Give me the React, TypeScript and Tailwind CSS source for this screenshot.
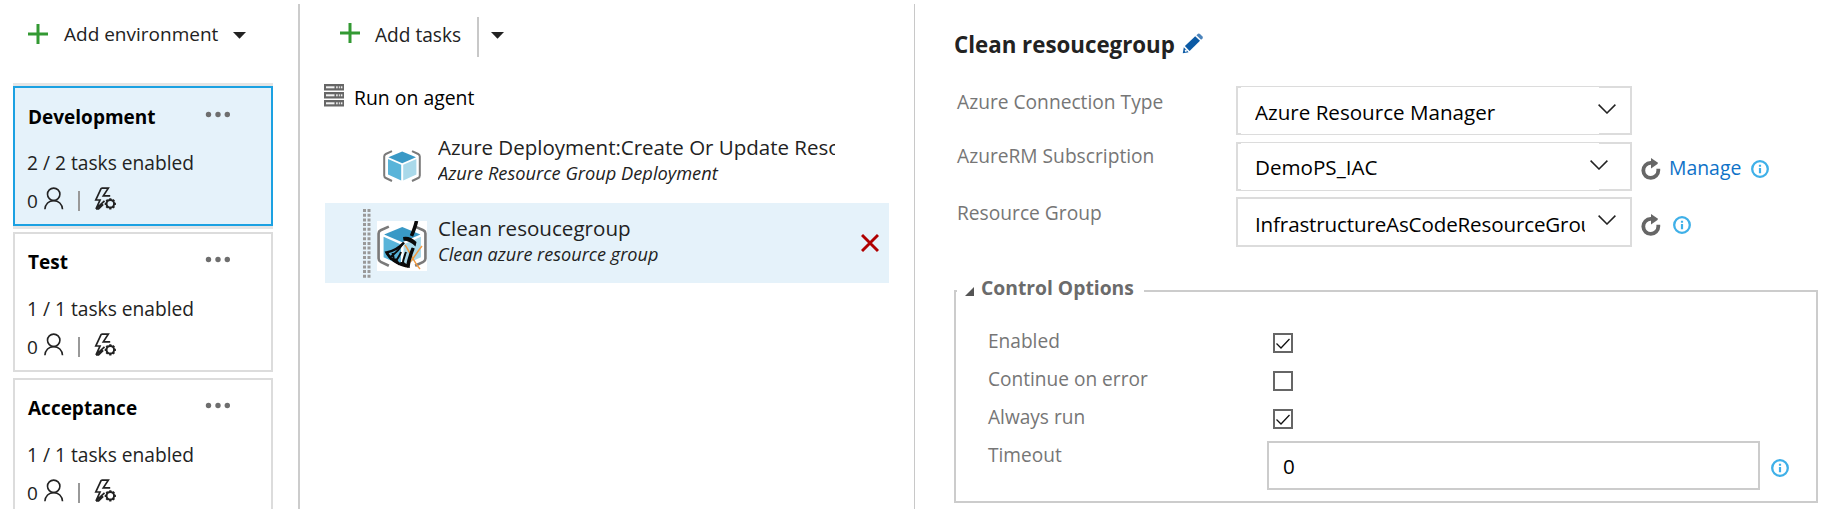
import type { ReactNode } from "react";

function PlusIcon() {
  return (
    <svg width="20" height="20" viewBox="0 0 20 20" className="shrink-0">
      <path d="M10 0v20M0 10h20" stroke="#339933" strokeWidth="3" fill="none" />
    </svg>
  );
}

function Caret() {
  return (
    <svg width="13" height="7" viewBox="0 0 13 7" className="shrink-0">
      <path d="M0 0h13L6.5 6.8z" fill="#222" />
    </svg>
  );
}

function Dots() {
  return (
    <svg width="26" height="7" viewBox="0 0 26 7" className="shrink-0">
      <g fill="#6e6e6e">
        <circle cx="3.5" cy="3.5" r="2.7" />
        <circle cx="13" cy="3.5" r="2.7" />
        <circle cx="22.3" cy="3.5" r="2.7" />
      </g>
    </svg>
  );
}

function PersonIcon() {
  return (
    <svg width="20" height="23" viewBox="0 0 20 23" className="shrink-0" fill="none" stroke="#222" strokeWidth="1.6">
      <circle cx="9.7" cy="7.3" r="6.2" />
      <path d="M0.9 22.3C1.2 17 4.8 13.6 9.7 13.6s8.5 3.4 8.8 8.7" />
    </svg>
  );
}

function BoltGearIcon() {
  return (
    <svg width="23" height="23" viewBox="0 0 23 23" className="shrink-0" fill="none" stroke="#222" strokeWidth="1.7">
      <path d="M7.3 1.2H14.3L9.3 8.8H16.2M7.3 1.2L1.8 13H6L2 21.8L10.5 13.8M2 21.8H4.6L9.2 17.4" />
      <circle cx="16.3" cy="16.8" r="3.8" strokeWidth="2" />
      <path
        d="M16.3 11.2v2M16.3 20.4v2M10.7 16.8h2M19.9 16.8h2M12.35 12.85l1.4 1.4M18.85 19.35l1.4 1.4M20.25 12.85l-1.4 1.4M13.75 19.35l-1.4 1.4"
        strokeWidth="2.2"
      />
    </svg>
  );
}

function ServerIcon() {
  return (
    <svg width="20" height="23" viewBox="0 0 20 23" className="shrink-0">
      {[0, 8, 16].map((y) => (
        <g key={y}>
          <rect x="0" y={y} width="20" height="6.5" fill="#666" />
          <rect x="2" y={y + 2.3} width="8.5" height="2" fill="#f2f2f2" />
          <rect x="12" y={y + 2.3} width="1.8" height="2" fill="#ddd" />
          <rect x="14.8" y={y + 2.3} width="1.4" height="2" fill="#ddd" />
          <rect x="17" y={y + 2.3} width="1.4" height="2" fill="#eee" />
        </g>
      ))}
    </svg>
  );
}

function CubeShape() {
  return (
    <>
      <path
        d="M9 1.2L2.8 4Q1.2 4.8 1.2 6.5V25.5Q1.2 27.2 2.8 28L9 31M29 1.2L35.200 4Q36.8 4.8 36.8 6.5V25.5Q36.8 27.2 35.2 28L29 31"
        fill="none"
        stroke="#7a7a7a"
        strokeWidth="2"
      />
      <path d="M19.2 1.5L33 7.2L19.2 13.2L5.400 7.2z" fill="#3999c6" />
      <path d="M5 9L18.2 14.8V30.5L5 24.5z" fill="#59b4d9" />
      <path d="M33.4 9L20.2 14.8V30.500L33.4 24.5z" fill="#a9d9ea" />
    </>
  );
}

function CubeIcon() {
  return (
    <svg width="38" height="32" viewBox="0 0 38 32" className="shrink-0">
      <CubeShape />
    </svg>
  );
}

function BroomIcon() {
  return (
    <svg width="50" height="50" viewBox="0 0 50 50" className="shrink-0 bg-white">
      <g transform="translate(0 4) scale(1.316)">
        <CubeShape />
      </g>
      <path d="M28 24C33 31 36 40 43 48M45 25C39 32 36 40 28 46" fill="none" stroke="#f39a3f" strokeWidth="1.5" />
      <path d="M39.500 0C38.500 5 37 9 34.500 15" stroke="#0a0a0a" strokeWidth="3.6" fill="none" />
      <path d="M26 16Q33 14.500 39.500 21L38.500 25.500Q33 20 26.500 19.500z" fill="#0a0a0a" />
      <path d="M27 21.500C22 27 17 30 9.500 31.500C12 37 20 44 31.500 45.500C32 38 34.500 33 36.500 27" fill="none" stroke="#0a0a0a" strokeWidth="2.6" />
      <path
        d="M26 22.500C22 29 18 33 13 36M15.500 32C16.500 36 17.500 38 16 40M24 31C22.500 35 20.500 38 18 41M29 31C27 36 26 40 25.500 44M35.500 27C33 33 31 39 30 45M10 31.500L14 38L19 38.500L22 43L26 41.500L31 46"
        fill="none"
        stroke="#0a0a0a"
        strokeWidth="2"
      />
    </svg>
  );
}

function PencilIcon() {
  return (
    <svg width="22" height="21" viewBox="0 0 22 21" className="shrink-0">
      <path d="M0.8 20.3L1.8 14.3L6.6 19.3z" fill="#0b5aa5" />
      <path d="M2.9 13.1L13.2 3.2L18 7.8L7.6 18z" fill="#0b5aa5" />
      <path d="M14.4 2.2L16 0.8Q17 0.2 18 1L20.5 3.5Q21.2 4.5 20.5 5.5L19.1 6.8z" fill="#4b83bb" />
      <path d="M3.2 17.2l1.3 1.3" stroke="#fff" strokeWidth="1.8" />
    </svg>
  );
}

function Chevron() {
  return (
    <svg width="18" height="10" viewBox="0 0 18 10" className="shrink-0">
      <path d="M0.6 0.6L9 9L17.4 0.6" fill="none" stroke="#222" strokeWidth="1.5" />
    </svg>
  );
}

function ReloadIcon() {
  return (
    <svg width="20" height="22" viewBox="0 0 20 22" className="shrink-0">
      <path d="M11 4.9H9.6A7.500 7.500 0 1 0 17.300 12.400V10.800" fill="none" stroke="#666" strokeWidth="3.8" />
      <path d="M10 0L17 4.8L16.500 6L10 10.500z" fill="#666" />
    </svg>
  );
}

function InfoIcon() {
  return (
    <svg width="18" height="18" viewBox="0 0 18 18" className="shrink-0">
      <circle cx="9" cy="9" r="7.8" fill="none" stroke="#3fb0e8" strokeWidth="2.3" />
      <path d="M9 4.7v2.100M9 8v5.200" stroke="#3fb0e8" strokeWidth="2.2" />
    </svg>
  );
}

type Environment = { name: string; tasks: string; selected?: boolean };

const environments: Environment[] = [
  { name: "Development", tasks: "2 / 2 tasks enabled", selected: true },
  { name: "Test", tasks: "1 / 1 tasks enabled" },
  { name: "Acceptance", tasks: "1 / 1 tasks enabled" },
];

function EnvironmentCard({ name, tasks, selected }: Environment) {
  return (
    <div
      className={
        selected
          ? "h-[140px] w-[260px] shrink-0 border-2 border-[#1ba1e2] bg-[#e5f2fa] pt-4 pl-3 shadow-[0_3px_0_#e5e5e5,0_-3px_0_#e5e5e5]"
          : "h-[140px] w-[260px] shrink-0 border-2 border-[#dcdcdc] bg-white pt-[15px] pl-3"
      }
    >
      <div className="flex h-[26px] items-start justify-between pr-[40px]">
        <span className="pl-px text-[19px] leading-[26px] font-bold text-black">{name}</span>
        <span className="pt-[7px]">
          <Dots />
        </span>
      </div>
      <div className={selected ? "mt-5 text-[19.2px] leading-[26px]" : "mt-[21px] text-[19.2px] leading-[26px]"}>{tasks}</div>
      <div className="mt-3 flex h-[26px] items-center">
        <span className="w-[17px] text-[19px] leading-[26px]">0</span>
        <span className="-mt-[6px]">
          <PersonIcon />
        </span>
        <span className="ml-[14px] h-5 w-[2px] bg-[#999]" />
        <span className="-mt-[6px] ml-[14px]">
          <BoltGearIcon />
        </span>
      </div>
    </div>
  );
}

function SelectBox({ value, thin, inset, tight }: { value: string; thin?: boolean; inset?: boolean; tight?: boolean }) {
  return (
    <div className={thin ? "flex h-[49px] w-[396px] border-2 border-[#dcdcdc]" : "flex h-[50px] w-[396px] border-2 border-[#dcdcdc]"}>
      <div className={thin ? "-my-px ml-[3px] w-[358px] bg-white pl-[14px]" : "ml-[3px] w-[358px] pl-[14px]"}>
        <div
          className={
            tight
              ? "w-[330px] overflow-hidden pt-[11px] text-[20.6px] leading-7 tracking-[-0.15px] text-black"
              : inset
                ? "w-[330px] overflow-hidden pt-[10px] text-[20.6px] leading-7 text-black"
                : "w-[330px] overflow-hidden pt-[11px] text-[20.6px] leading-7 text-black"
          }
        >
          {value}
        </div>
      </div>
      <div className={inset ? "-ml-[9px] pt-4" : "-ml-px pt-4"}>
        <Chevron />
      </div>
    </div>
  );
}

function Field({ label, raised, children }: { label: string; raised?: boolean; children: ReactNode }) {
  return (
    <div className={raised ? "flex h-[55px] items-start" : "flex h-[56px] items-start"}>
      <div
        className={
          raised
            ? "w-[279px] pt-px text-[19.2px] leading-[26px] text-[#767676]"
            : "w-[279px] pt-[3px] text-[19.2px] leading-[26px] text-[#767676]"
        }
      >
        {label}
      </div>
      {children}
    </div>
  );
}

function Option({ label, checked }: { label: string; checked: boolean }) {
  return (
    <div className="flex h-[38px] items-start">
      <div className="w-[285px] text-[19.1px] leading-[26px]">{label}</div>
      <span className="mt-[5px] flex size-5 items-center justify-center border-2 border-[#666]">
        {checked && (
          <svg width="14" height="11" viewBox="0 0 14 11">
            <path d="M0.5 5.5L5 10L13.5 1" fill="none" stroke="#111" strokeWidth="1.3" />
          </svg>
        )}
      </span>
    </div>
  );
}

export default function App() {
  return (
    <div className="flex h-[509px] w-[1832px] overflow-hidden bg-white pt-1 font-['Open_Sans','Noto_Sans',sans-serif] whitespace-nowrap text-[#222]">
      <aside className="flex h-[505px] w-[300px] shrink-0 flex-col border-r-2 border-[#ccc] pl-[13px]">
        <div className="flex h-[82px] shrink-0 items-start pl-[15px]">
          <span className="pt-5">
            <PlusIcon />
          </span>
          <span className="ml-4 pt-4 text-[19px] leading-[28px]">Add environment</span>
          <span className="ml-[15px] pt-[28px]">
            <Caret />
          </span>
        </div>
        <div className="flex flex-col gap-[6px]">
          {environments.map((e) => (
            <EnvironmentCard key={e.name} {...e} />
          ))}
        </div>
      </aside>

      <main className="h-[505px] w-[615px] shrink-0 border-r border-[#c8c8c8] pl-[25px]">
        <div className="flex h-[80px] items-start pl-[15px]">
          <span className="pt-[19px]">
            <PlusIcon />
          </span>
          <span className="ml-[15px] w-[102px] pt-[17px] text-[19.1px] leading-[28px]">Add tasks</span>
          <span className="mt-[13px] h-10 w-[2px] bg-[#c8c8c8]" />
          <span className="ml-3 pt-[28px]">
            <Caret />
          </span>
        </div>
        <div className="-ml-px flex h-[39px] items-start">
          <ServerIcon />
          <span className="ml-[10px] text-[19.4px] leading-[28px] text-black">Run on agent</span>
        </div>
        <div className="flex h-20 w-[564px] items-start pl-[58px]">
          <span className="mt-[27px]">
            <CubeIcon />
          </span>
          <div className="ml-[17px] w-[397px] overflow-hidden pt-[10px]">
            <div className="text-[20.5px] leading-[28px]">Azure Deployment:Create Or Update Resource Group</div>
            <div className="text-[18.25px] leading-6 italic">Azure Resource Group Deployment</div>
          </div>
        </div>
        <div className="flex h-20 w-[564px] items-start bg-[#e5f2fa] pl-[38px]">
          <svg width="8" height="70" viewBox="0 0 8 70" className="mt-[6px]">
            <path d="M1.5 0V70M6 0V70" stroke="#999" strokeWidth="3" strokeDasharray="3 1.7" />
          </svg>
          <span className="mt-[18px] ml-[6px]">
            <BroomIcon />
          </span>
          <div className="ml-[11px] w-[397px] pt-[11px]">
            <div className="text-[20.6px] leading-[28px]">Clean resoucegroup</div>
            <div className="text-[18.1px] leading-6 italic">Clean azure resource group</div>
          </div>
          <svg width="18" height="18" viewBox="0 0 18 18" className="mt-[31px] ml-[26px] shrink-0">
            <path d="M1 1L17 17M17 1L1 17" stroke="#b00000" strokeWidth="2.9" />
          </svg>
        </div>
      </main>

      <section className="h-[505px] w-[903px] shrink-0 pl-[39px]">
        <div className="flex h-[82px] items-start">
          <h1 className="w-[228px] pt-[25px] text-[22.3px] leading-8 font-bold">Clean resoucegroup</h1>
          <span className="pt-[29px]">
            <PencilIcon />
          </span>
        </div>
        <div className="h-[186px] pl-[3px]">
          <Field label="Azure Connection Type">
            <SelectBox value="Azure Resource Manager" thin />
          </Field>
          <Field label="AzureRM Subscription" raised>
            <SelectBox value="DemoPS_IAC" thin inset />
            <span className="mt-4 ml-[9px]">
              <ReloadIcon />
            </span>
            <span className="mt-[13px] ml-2 w-[82px] text-[19.4px] leading-[26px] text-[#0e72c8]">Manage</span>
            <span className="mt-[18px]">
              <InfoIcon />
            </span>
          </Field>
          <Field label="Resource Group">
            <SelectBox value="InfrastructureAsCodeResourceGroup" tight />
            <span className="mt-[17px] ml-[9px]">
              <ReloadIcon />
            </span>
            <span className="mt-[19px] ml-3">
              <InfoIcon />
            </span>
          </Field>
        </div>
        <fieldset className="h-[231px] w-[864px] border-2 border-[#ccc] text-[#767676]">
          <legend className="ml-px flex h-[38px] w-[187px] items-start pt-[2px] pl-2">
            <svg width="9" height="9" viewBox="0 0 9 9" className="mt-[13px]">
              <path d="M9 0V9H0z" fill="#555" />
            </svg>
            <span className="ml-[7px] text-[19.3px] leading-[28px] font-bold text-[#6b6b6b]">Control Options</span>
          </legend>
          <div className="pt-[18px] pl-[32px]">
            <Option label="Enabled" checked />
            <Option label="Continue on error" checked={false} />
            <Option label="Always run" checked />
            <div className="flex items-start">
              <div className="w-[279px] text-[19.1px] leading-[26px]">Timeout</div>
              <div className="-mt-px h-[49px] w-[493px] border-2 border-[#ccc] pt-[9px] pl-[14px] text-[20.6px] leading-7 text-black">
                0
              </div>
              <span className="mt-[17px] ml-[11px]">
                <InfoIcon />
              </span>
            </div>
          </div>
        </fieldset>
      </section>
    </div>
  );
}
